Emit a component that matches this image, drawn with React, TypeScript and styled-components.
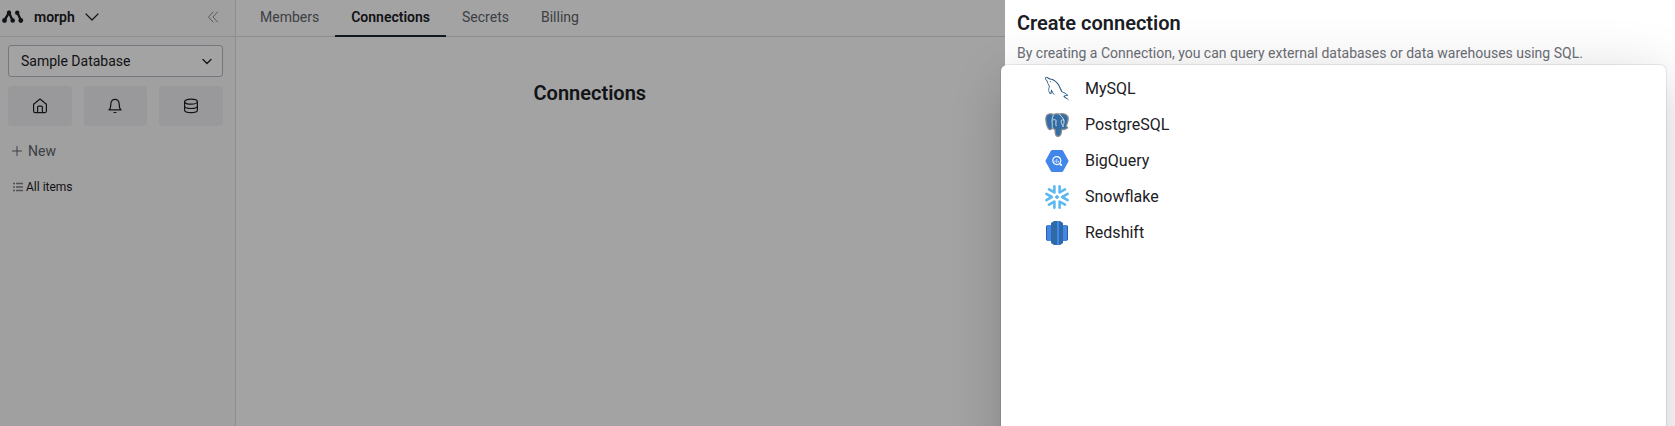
import React from "react";
import styled, { createGlobalStyle, css } from "styled-components";
import { GrMysql } from "react-icons/gr";
import { SiPostgresql } from "react-icons/si";

const GlobalStyle = createGlobalStyle`
  *, *::before, *::after { box-sizing: border-box; }
  body { margin: 0; overflow: hidden; }
  button, select { font: inherit; color: inherit; }
`;

const Page = styled.div`
  display: flex;
  height: 100vh;
  font-family: Roboto, "Liberation Sans", sans-serif;
  font-size: 14px;
  line-height: 20px;
  color: #1c2024;
  background: #fff;
`;

const Sidebar = styled.aside`
  display: flex;
  flex-direction: column;
  flex: none;
  width: 236px;
  background: #fafafa;
  border-right: 1px solid #dfdfe2;
`;

const Brand = styled.header`
  display: flex;
  align-items: center;
  height: 37px;
  padding: 0 16px 2px 2px;
  border-bottom: 1px solid #dfdfe2;
`;

const BrandButton = styled.button`
  display: flex;
  align-items: center;
  gap: 10px;
  padding: 0;
  border: 0;
  background: none;
  font-weight: 600;
`;

const CollapseButton = styled.button`
  display: flex;
  margin-left: auto;
  padding: 0;
  border: 0;
  background: none;
  color: #8b8d98;
`;

const SidebarBody = styled.div`
  display: flex;
  flex-direction: column;
  padding: 8px 12px 0 8px;
`;

const SelectFrame = styled.div`
  display: grid;
  align-items: center;

  > * { grid-area: 1 / 1; }
  > svg { justify-self: end; margin-right: 10px; pointer-events: none; }
`;

const DatabaseSelect = styled.select`
  width: 100%;
  height: 32px;
  padding: 0 12px;
  border: 1px solid #b9bbc6;
  border-radius: 3px;
  background: #fff;
  appearance: none;
`;

const Shortcuts = styled.nav`
  display: grid;
  grid-template-columns: repeat(3, 1fr);
  gap: 12px;
  margin-top: 9px;
`;

const ShortcutButton = styled.button`
  display: flex;
  align-items: center;
  justify-content: center;
  height: 40px;
  padding: 0;
  border: 0;
  border-radius: 4px;
  background: #f0f0f3;
`;

const NewButton = styled.button`
  display: flex;
  align-items: center;
  gap: 6px;
  align-self: flex-start;
  margin-top: 15px;
  padding: 0 0 0 4px;
  border: 0;
  background: none;
  color: #60646c;
`;

const ItemsLink = styled.a`
  display: flex;
  align-items: center;
  gap: 2px;
  margin-top: 16px;
  padding-left: 4px;
  font-size: 12px;
  color: inherit;
  text-decoration: none;

  svg { color: #80838d; }
`;

const Main = styled.main`
  flex: 1;
  min-width: 0;
`;

const Tabs = styled.nav`
  display: flex;
  height: 37px;
  padding-left: 8px;
  border-bottom: 1px solid #dfdfe2;
`;

const Tab = styled.a<{ $active?: boolean }>`
  height: 37px;
  padding: 7px 16px 0;
  color: #60646c;
  text-decoration: none;
  ${({ $active }) =>
    $active &&
    css`
      border-bottom: 2px solid #202830;
      color: #1c2024;
      font-weight: 600;
    `}
`;

const Content = styled.section`
  max-width: 844px;
  margin: 0 auto;
  padding-top: 42px;
`;

const Title = styled.h1`
  margin: 0;
  font-size: 20px;
  line-height: 28px;
  font-weight: 600;
`;

const Overlay = styled.div`
  position: fixed;
  inset: 0;
  overflow: hidden;
  background: rgba(0, 0, 0, 0.36);
`;

const Drawer = styled.div`
  position: absolute;
  top: 0;
  right: 0;
  bottom: 0;
  width: 40%;
  padding: 9px 12px;
  background: #fff;
`;

const Description = styled.p`
  margin: 6px 0 0;
  color: #6b6e76;
`;

const Menu = styled.ul`
  position: absolute;
  top: 65px;
  left: -4px;
  right: 9px;
  height: 100%;
  margin: 0;
  padding: 6px 8px;
  list-style: none;
  background: #fff;
  border-radius: 6px;
  box-shadow:
    0 0 0 1px rgba(0, 0, 60, 0.07),
    0 12px 60px rgba(0, 0, 0, 0.18),
    0 12px 32px -16px rgba(0, 9, 50, 0.12);
`;

const MenuButton = styled.button`
  display: flex;
  align-items: center;
  gap: 16px;
  width: 100%;
  height: 36px;
  padding: 0 36px;
  border: 0;
  background: none;
  font-size: 16px;
  line-height: 24px;
  text-align: left;
`;

const MorphLogo = () => (
  <svg width="22" height="14" viewBox="0 0 22 14" fill="currentColor" stroke="currentColor">
    <path d="M2.4 10.4 7 2.600 10.600 10.400M15.300 2.600 19 10.400" fill="none" strokeWidth="2.400" />
    <g stroke="none">
      <circle cx="2.500" cy="10.500" r="2.400" />
      <circle cx="7" cy="2.700" r="2.200" />
      <circle cx="10.700" cy="10.500" r="2.300" />
      <circle cx="15.200" cy="2.700" r="2.200" />
      <circle cx="18.800" cy="10.500" r="2.400" />
    </g>
  </svg>
);

const stroke = { fill: "none", stroke: "currentColor", strokeLinecap: "round", strokeLinejoin: "round" } as const;

const BrandChevron = () => (
  <svg width="14" height="8" viewBox="0 0 14 8" {...stroke} strokeWidth="1.2">
    <path d="M1 1 7 7 13 1" />
  </svg>
);

const CollapseIcon = () => (
  <svg width="12" height="12" viewBox="0 0 12 12" {...stroke}>
    <path d="M6 1 1.5 6 6 11M10.5 1 6 6l4.5 5" />
  </svg>
);

const SelectChevron = () => (
  <svg width="12" height="12" viewBox="0 0 12 12" {...stroke} strokeWidth="1.3">
    <path d="m2 4.5 4 4 4-4" />
  </svg>
);

const HomeIcon = () => (
  <svg width="16" height="16" viewBox="0 0 16 16" {...stroke} strokeWidth="1.2">
    <path d="M1.6 6.2 8 1l6.400 5.200V13a1.600 1.600 0 0 1-1.600 1.600H3.200A1.600 1.600 0 0 1 1.600 13ZM5.600 14.500V9.200q0-1 1-1h2.800q1 0 1 1v5.300" />
  </svg>
);

const BellIcon = () => (
  <svg width="16" height="16" viewBox="0 0 16 16" {...stroke} strokeWidth="1.2">
    <path d="M2 11.8h12c-1.2-.9-1.8-2.2-1.8-5.6C12.2 3.1 10.5 1.3 8 1.3S3.8 3.1 3.8 6.2C3.8 9.6 3.2 10.9 2 11.8ZM7 14.5h2" />
  </svg>
);

const DatabaseIcon = () => (
  <svg width="16" height="16" viewBox="0 0 16 16" {...stroke} strokeWidth="1.2">
    <ellipse cx="8" cy="3.700" rx="6.400" ry="2.500" />
    <path d="M1.600 3.700v8.600c0 1.400 2.800 2.400 6.400 2.400s6.400-1 6.400-2.400V3.700M1.600 8c0 1.400 2.800 2.500 6.400 2.500S14.400 9.400 14.400 8" />
  </svg>
);

const PlusIcon = () => (
  <svg width="10" height="10" viewBox="0 0 10 10" {...stroke}>
    <path d="M5 .5v9M.5 5h9" />
  </svg>
);

const ListIcon = () => (
  <svg width="12" height="10" viewBox="0 0 12 10" fill="none" stroke="currentColor" strokeWidth="1.6">
    <path d="M1 1.500h2M4 1.500h7M1 5h2M4 5h7M1 8.500h2M4 8.500h7" />
  </svg>
);

const PostgresIcon = () => (
  <svg width="24" height="24" viewBox="0 0 24 24" strokeLinejoin="round" strokeLinecap="round">
    <path
      d="M6 .8C2 .6.6 3 .9 7c.3 3.5 1.6 8.200 3.400 9.400 1.500.6 2.200-.2 3.400-1.400.6 1 1.300 1.300 2.300 1.300.2 3-.1 6.700 2.300 7 3.500.3 4-2.100 4.300-6.800 3 0 5.500-.5 6-2-.5-1-1.500-.8-1.500-1.300C22.500 10.500 23.700 6 22.800 3.500 21 .5 17 .3 14.500 1.100 11.500.6 9.500 1 8.500 1.500Z"
      fill="#336da5"
      stroke="#8b8b8d"
      strokeWidth="1.300"
    />
    <path
      d="M8.300 2.200C6.500 5.500 7 9 7.300 11.500c.2 1.500-.8 2.300.4 3.500M8 7c1-.8 2.700-.6 3 .6.200 2-.6 3.600.1 5.200M14.800 1.800c3 2.300 4.200 5 4.300 7.200-.1 2-1.300 3.200-1.100 4.500M18.800 7c-1.500-.4-2.800 0-2.700 1.200.1 2 1.200 3.300 1.900 5.300"
      fill="none"
      stroke="#d5dae0"
      strokeWidth="1"
    />
  </svg>
);

const BigQueryIcon = () => (
  <svg width="24" height="24" viewBox="0 0 24 24">
    <path
      d="M7.200 1h9.600a1.500 1.500 0 0 1 1.300.8l5.200 9.400a1.500 1.500 0 0 1 0 1.600l-5.200 9.400a1.500 1.500 0 0 1-1.300.8H7.200a1.500 1.500 0 0 1-1.300-.8L.7 12.800a1.500 1.500 0 0 1 0-1.600L5.900 1.800A1.500 1.500 0 0 1 7.200 1Z"
      fill="#4386ea"
    />
    <g fill="none" stroke="#fff">
      <circle cx="11.8" cy="11.600" r="4" strokeWidth="1.200" />
      <path d="m14.800 14.600 2 2" strokeWidth="1.800" />
      <path d="M10 11.500v1.800M11.800 10v4M13.600 12v1.300" strokeWidth=".8" />
    </g>
  </svg>
);

const SnowflakeIcon = () => (
  <svg width="24" height="24" viewBox="0 0 24 24" fill="none" stroke="#5cb8f0" strokeWidth="2.600" strokeLinecap="round" strokeLinejoin="round">
    {[0, 60, 120, 180, 240, 300].map((angle) => (
      <path key={angle} d="M22.600 8.900 17.200 12l5.400 3.100" transform={`rotate(${angle} 12 12)`} />
    ))}
    <path d="M12 11 13 12 12 13 11 12Z" strokeWidth="2" />
  </svg>
);

const RedshiftIcon = () => (
  <svg width="24" height="24" viewBox="0 0 24 24">
    <path d="M1 5 3 4v16l-2-1ZM21 4l2 1v14l-2 1Z" fill="#2e5f99" />
    <path d="M2 4h4v16H2ZM18 4h4v16h-4Z" fill="#4386ea" />
    <path d="M6 2 9 0h6l3 2v20l-3 2H9l-3-2Z" fill="#2e6aa5" />
    <path d="M12 0h2v24h-2Z" fill="#4386ea" />
  </svg>
);

const connections = [
  { name: "MySQL", icon: <GrMysql size={24} color="#1f4f78" /> },
  { name: "PostgreSQL", icon: <PostgresIcon /> },
  { name: "BigQuery", icon: <BigQueryIcon /> },
  { name: "Snowflake", icon: <SnowflakeIcon /> },
  { name: "Redshift", icon: <RedshiftIcon /> },
];

export default function App() {
  return (
    <Page>
      <GlobalStyle />
      <Sidebar>
        <Brand>
          <BrandButton>
            <MorphLogo />
            <span>morph</span>
            <BrandChevron />
          </BrandButton>
          <CollapseButton aria-label="Collapse sidebar">
            <CollapseIcon />
          </CollapseButton>
        </Brand>
        <SidebarBody>
          <SelectFrame>
            <DatabaseSelect aria-label="Database" defaultValue="sample">
              <option value="sample">Sample Database</option>
            </DatabaseSelect>
            <SelectChevron />
          </SelectFrame>
          <Shortcuts>
            <ShortcutButton aria-label="Home"><HomeIcon /></ShortcutButton>
            <ShortcutButton aria-label="Notifications"><BellIcon /></ShortcutButton>
            <ShortcutButton aria-label="Databases"><DatabaseIcon /></ShortcutButton>
          </Shortcuts>
          <NewButton>
            <PlusIcon />
            New
          </NewButton>
          <ItemsLink href="#items">
            <ListIcon />
            All items
          </ItemsLink>
        </SidebarBody>
      </Sidebar>
      <Main>
        <Tabs>
          <Tab href="#members">Members</Tab>
          <Tab href="#connections" $active aria-current="page">Connections</Tab>
          <Tab href="#secrets">Secrets</Tab>
          <Tab href="#billing">Billing</Tab>
        </Tabs>
        <Content>
          <Title>Connections</Title>
        </Content>
      </Main>
      <Overlay>
        <Drawer role="dialog" aria-labelledby="drawer-title">
          <Title as="h2" id="drawer-title">Create connection</Title>
          <Description>
            By creating a Connection, you can query external databases or data warehouses using SQL.
          </Description>
          <Menu>
            {connections.map(({ name, icon }) => (
              <li key={name}>
                <MenuButton>
                  {icon}
                  {name}
                </MenuButton>
              </li>
            ))}
          </Menu>
        </Drawer>
      </Overlay>
    </Page>
  );
}
